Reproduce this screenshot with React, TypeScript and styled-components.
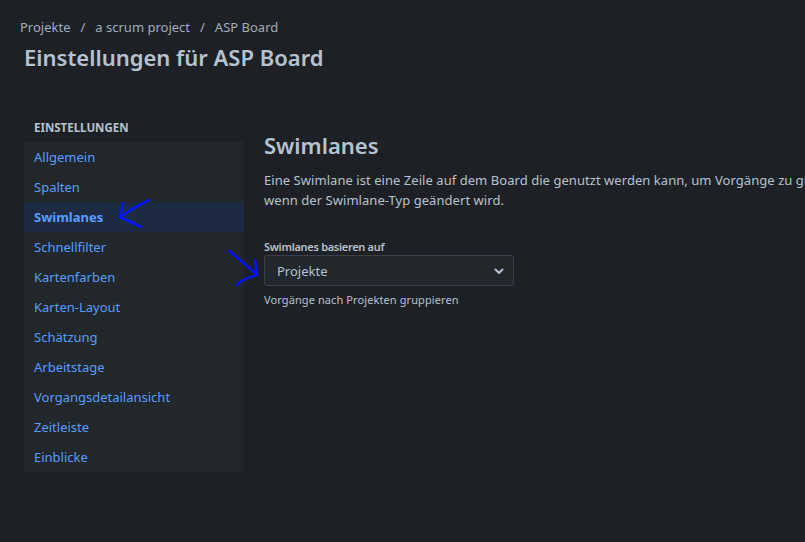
import React from "react";
import styled, { createGlobalStyle } from "styled-components";

const Global = createGlobalStyle`
  html, body { margin: 0; padding: 0; background: #1d2125; overflow: hidden; }
  body { font-family: "Noto Sans", "Open Sans", sans-serif; color: #b6c2cf; }
  * { box-sizing: border-box; }
`;

const Page = styled.div`
  position: relative;
  width: 805px;
  height: 542px;
  overflow: hidden;
  background: #1d2125;
`;

const Header = styled.header`
  padding: 17px 0 0 20px;
`;

const Breadcrumbs = styled.nav`
  display: flex;
  align-items: center;
  gap: 9px;
  font-size: 13px;
  line-height: 20px;
  color: #9fadbc;
`;

const Crumb = styled.span``;
const Sep = styled.span`
  padding: 0 1px;
`;

const Title = styled.h1`
  margin: 6px 0 0 4px;
  font-size: 22px;
  line-height: 28px;
  font-weight: 600;
  color: #b6c2cf;
`;

const Body = styled.div`
  display: flex;
  gap: 20px;
  padding: 49px 0 0 24px;
`;

const Sidebar = styled.aside`
  width: 220px;
  flex: none;
`;

const SideHeading = styled.div`
  padding: 0 10px;
  font-size: 11.5px;
  line-height: 16px;
  font-weight: 700;
  color: #b6c2cf;
  text-transform: uppercase;
  margin-bottom: 6px;
`;

const NavList = styled.ul`
  list-style: none;
  margin: 0;
  padding: 0;
  background: #22272b;
`;

const NavItem = styled.li<{ $active?: boolean }>`
  height: 30px;
  display: flex;
  align-items: center;
  padding: 0 10px;
  font-size: 13px;
  color: #579dff;
  font-weight: ${(p) => (p.$active ? 700 : 400)};
  background: ${(p) => (p.$active ? "#1c2b41" : "transparent")};
`;

const Main = styled.main`
  flex: 1;
  min-width: 0;
  padding-top: 10px;
`;

const H2 = styled.h2`
  margin: 0;
  font-size: 22px;
  line-height: 30px;
  font-weight: 600;
  color: #b6c2cf;
`;

const Para = styled.p`
  margin: 10px 0 0 0;
  font-size: 13px;
  line-height: 20px;
  letter-spacing: 0.05px;
  color: #b6c2cf;
  white-space: nowrap;
`;

const Line = styled.span`
  display: block;
`;

const Field = styled.div`
  margin-top: 29px;
  width: 250px;
`;

const Label = styled.label`
  display: block;
  font-size: 11px;
  line-height: 16px;
  font-weight: 600;
  letter-spacing: -0.3px;
  color: #b6c2cf;
`;

const SelectBox = styled.div`
  height: 31px;
  border: 1px solid #38414a;
  border-radius: 3px;
  background: #22272b;
  display: flex;
  align-items: center;
  justify-content: space-between;
  padding: 0 8px 0 12px;
  font-size: 13px;
  color: #b6c2cf;
`;

const Help = styled.div`
  margin-top: 6px;
  font-size: 11px;
  line-height: 16px;
  letter-spacing: 0.1px;
  color: #b6c2cf;
`;

const Annotation = styled.svg`
  position: absolute;
  left: 0;
  top: 0;
  pointer-events: none;
`;

const items = [
  "Allgemein",
  "Spalten",
  "Swimlanes",
  "Schnellfilter",
  "Kartenfarben",
  "Karten-Layout",
  "Schätzung",
  "Arbeitstage",
  "Vorgangsdetailansicht",
  "Zeitleiste",
  "Einblicke",
];

export default function App() {
  return (
    <Page>
      <Global />
      <Header>
        <Breadcrumbs>
          <Crumb>Projekte</Crumb>
          <Sep>/</Sep>
          <Crumb>a scrum project</Crumb>
          <Sep>/</Sep>
          <Crumb>ASP Board</Crumb>
        </Breadcrumbs>
        <Title>Einstellungen für ASP Board</Title>
      </Header>
      <Body>
        <Sidebar>
          <SideHeading>Einstellungen</SideHeading>
          <NavList>
            {items.map((it) => (
              <NavItem key={it} $active={it === "Swimlanes"}>
                {it}
              </NavItem>
            ))}
          </NavList>
        </Sidebar>
        <Main>
          <H2>Swimlanes</H2>
          <Para>
            <Line>
              Eine Swimlane ist eine Zeile auf dem Board die genutzt werden kann, um Vorgänge zu gruppieren. Die Einstellungen ändern sich,
            </Line>
            <Line>wenn der Swimlane-Typ geändert wird.</Line>
          </Para>
          <Field>
            <Label>Swimlanes basieren auf</Label>
            <SelectBox>
              <span>Projekte</span>
              <svg width="12" height="12" viewBox="0 0 12 12">
                <path d="M2.5 4.5 L6 8 L9.5 4.5" stroke="#b6c2cf" strokeWidth="2" fill="none" strokeLinecap="round" strokeLinejoin="round" />
              </svg>
            </SelectBox>
            <Help>Vorgänge nach Projekten gruppieren</Help>
          </Field>
        </Main>
      </Body>
      <Annotation width="805" height="542" viewBox="0 0 805 542">
        <g stroke="#0514ff" strokeWidth="2.5" fill="none" strokeLinecap="round" strokeLinejoin="round">
          <path d="M149 200 Q134 207 120 217" />
          <path d="M123 203 L120 217" />
          <path d="M120 217 Q131 222 141 227" />
          <path d="M229 251 Q244 263 257 275" />
          <path d="M255 260 L257 275" />
          <path d="M237 285 Q240 280 257 275" />
        </g>
      </Annotation>
    </Page>
  );
}
